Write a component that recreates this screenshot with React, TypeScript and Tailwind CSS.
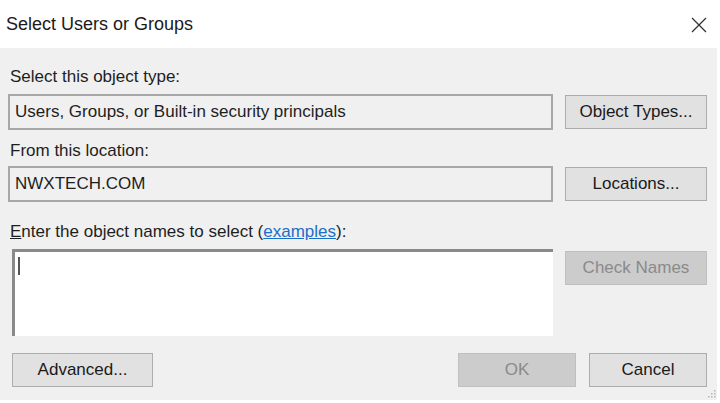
import React from "react";

const font = { fontFamily: '"Liberation Sans", Arial, sans-serif' };

function Button({
    label,
    disabled,
    className = "",
}: {
    label: string;
    disabled?: boolean;
    className?: string;
}) {
    return (
        <button
            type="button"
            disabled={disabled}
            className={`h-[34px] border text-[17px] ${
                disabled
                    ? "bg-[#cccccc] border-[#bfbfbf] text-[#8a8a8a]"
                    : "bg-[#e1e1e1] border-[#adadad] text-[#1a1a1a]"
            } ${className}`}>
            {label}
        </button>
    );
}

export default function App() {
    return (
        <div className="w-[720px] h-[403px] bg-white overflow-hidden" style={font}>
            {/* Title bar */}
            <div className="h-[48px] flex items-center justify-between pl-[6px] pr-[13px]">
                <span className="text-[18px] text-[#1a1a1a] mt-[1px]">
                    Select Users or Groups
                </span>
                <svg width="16" height="16" viewBox="0 0 16 16" className="mt-[1px]">
                    <path d="M1 1 L15 15 M15 1 L1 15" stroke="#333" strokeWidth="1.3" />
                </svg>
            </div>

            {/* Body */}
            <div className="relative h-[352px] mr-[3px] bg-[#f0f0f0] pl-[8px] pr-[10px] pt-[19px] text-[17px] text-[#1e1e1e]">
                <div className="leading-[20px] pl-[2px]">Select this object type:</div>
                <div className="mt-[7px] flex items-center gap-[12px]">
                    <div className="w-[545px] h-[36px] border-2 border-[#a8a8a8] bg-[#f0f0f0] flex items-center pl-[5px]">
                        Users, Groups, or Built-in security principals
                    </div>
                    <Button label="Object Types..." className="w-[142px]" />
                </div>

                <div className="mt-[11px] leading-[20px] pl-[2px]">From this location:</div>
                <div className="mt-[5px] flex items-center gap-[12px]">
                    <div className="w-[545px] h-[36px] border-2 border-[#a8a8a8] bg-[#f0f0f0] flex items-center pl-[5px]">
                        NWXTECH.COM
                    </div>
                    <Button label="Locations..." className="w-[142px]" />
                </div>

                <div className="mt-[20px] leading-[20px] pl-[2px]">
                    <span className="underline">E</span>nter the object names to select (
                    <a className="text-[#1a6fc9] underline">examples</a>):
                </div>
                <div className="mt-[7px] flex items-start gap-[12px]">
                    <div className="ml-[4px] w-[541px] h-[87px] bg-white border-t-[3px] border-l-[3px] border-[#8a8a8a] relative">
                        <div className="absolute left-[3px] top-[5px] w-[2px] h-[18px] bg-[#555]" />
                    </div>
                    <Button label="Check Names" disabled className="w-[142px] mt-[2px]" />
                </div>

                <div className="mt-[17px] flex items-center">
                    <Button label="Advanced..." className="ml-[4px] w-[141px]" />
                    <div className="flex-1" />
                    <Button label="OK" disabled className="w-[118px]" />
                    <Button label="Cancel" className="ml-[13px] w-[118px]" />
                </div>

                {/* size grip */}
                <svg width="8" height="8" viewBox="0 0 8 8" className="absolute right-[1px] bottom-[2px]">
                    <rect x="6" y="0" width="1.5" height="1.5" fill="#b5b5b5" />
                    <rect x="3" y="3" width="1.5" height="1.5" fill="#b5b5b5" />
                    <rect x="6" y="3" width="1.5" height="1.5" fill="#b5b5b5" />
                    <rect x="0" y="6" width="1.5" height="1.5" fill="#b5b5b5" />
                    <rect x="3" y="6" width="1.5" height="1.5" fill="#b5b5b5" />
                    <rect x="6" y="6" width="1.5" height="1.5" fill="#b5b5b5" />
                </svg>
            </div>
        </div>
    );
}
